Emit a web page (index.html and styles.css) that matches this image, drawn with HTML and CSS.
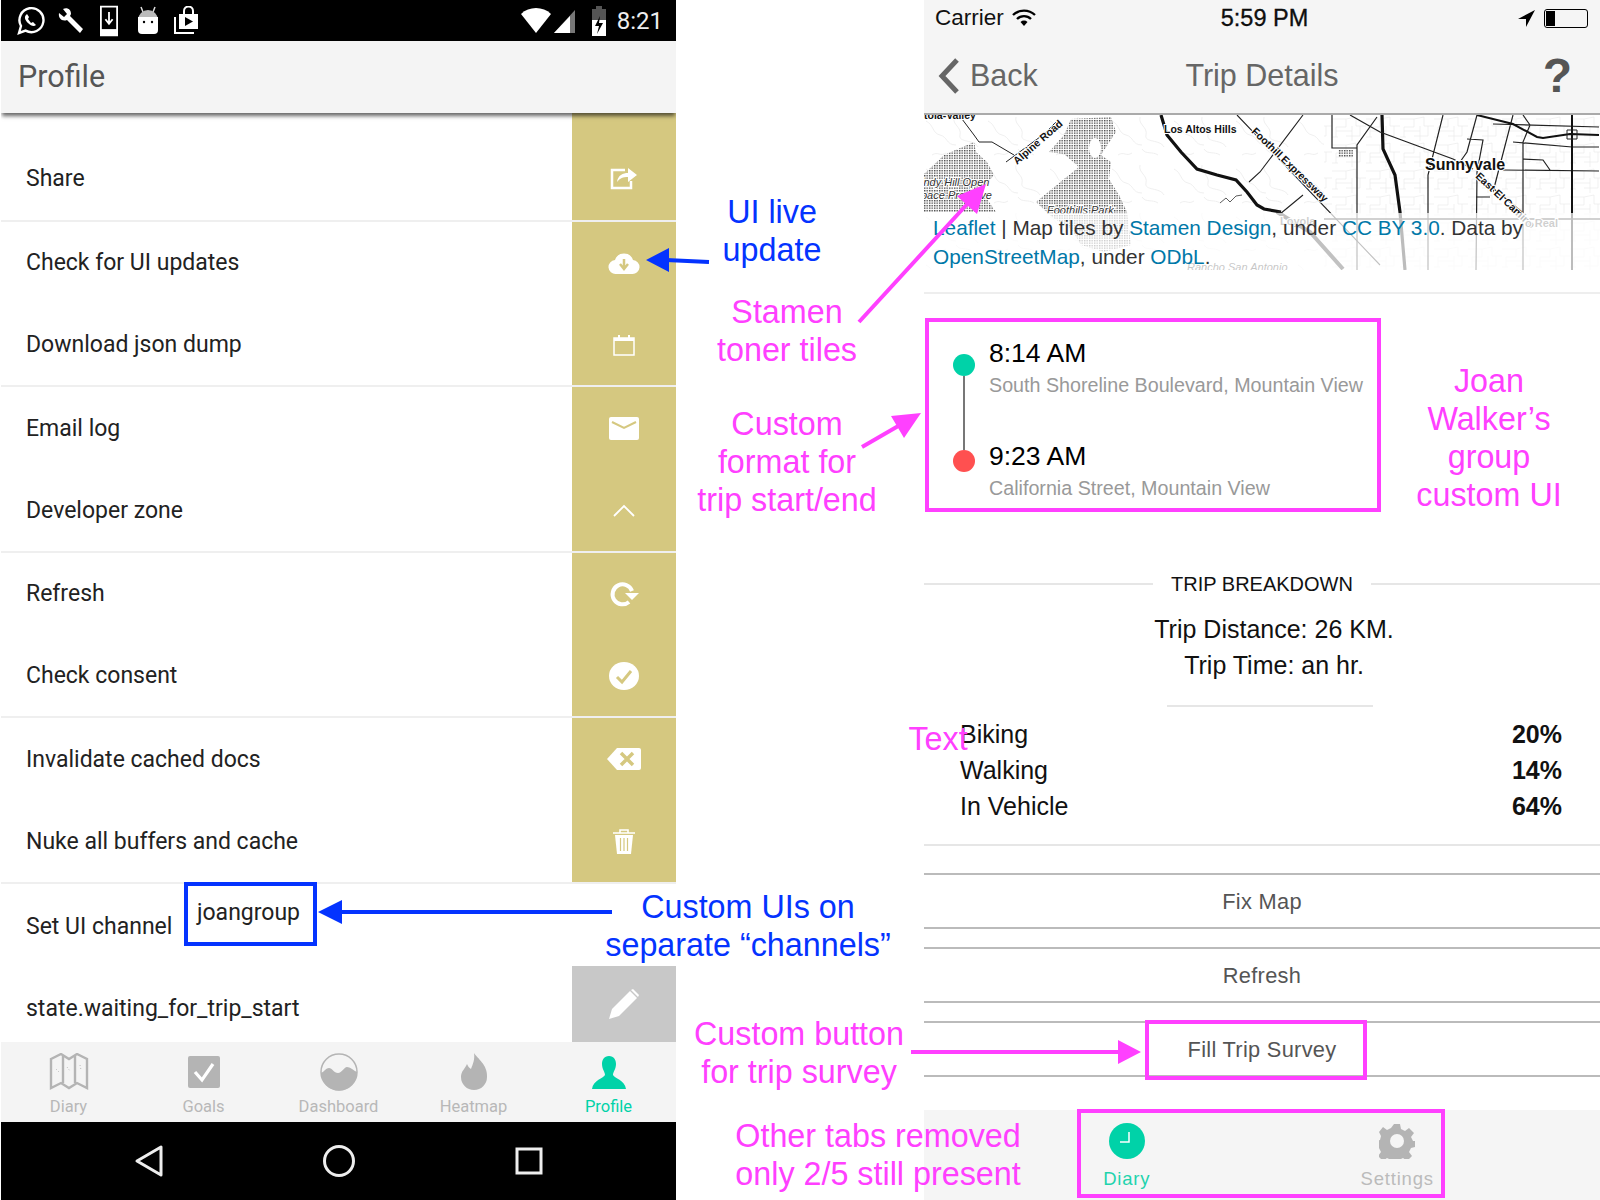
FILE: index.html
```html
<!DOCTYPE html>
<html lang="en">
<head>
<meta charset="UTF-8">
<title>Custom UI channels</title>
<link rel="stylesheet" href="styles.css">
</head>
<body>
<div class="page">

    <!-- android profile screen -->
    <div class="android">
        <div class="a-status">
            <svg width="30" height="30" viewBox="0 0 30 30" class="st st1"><path d="M3 27l2-7a12 12 0 1 1 4.600 4.600z" fill="none" stroke="#fff" stroke-width="2.400"/><path d="M10 9c-2 2-1 5 2 8s6 4 8 2l-3-3-2 1-3-4 1-2-2-3z" fill="#fff"/></svg>
            <svg width="30" height="30" viewBox="0 0 30 30" class="st st2"><path d="M3 7l5 4 3-3-4-5c4-2 8 0 8 5l-1 2 13 13-3 4-13-13c-5 2-9-2-8-7z" fill="#fff"/></svg>
            <svg width="18" height="32" viewBox="0 0 20 34" class="st st3"><path d="M1 1h18v32H1z" fill="none" stroke="#fff" stroke-width="2"/><path d="M1 26h18v7H1z" fill="#fff"/><path d="M10 7v12M6 15l4 5 4-5" fill="none" stroke="#fff" stroke-width="2"/></svg>
            <svg width="24" height="30" viewBox="0 0 24 30" class="st st4"><path d="M7 6L5 1M17 6l2-5" stroke="#ddd" stroke-width="1.500"/><path d="M2 14a10 10 0 0 1 20 0z" fill="#bbb"/><path d="M2 11h20v13a4 4 0 0 1-4 4H6a4 4 0 0 1-4-4z" fill="#fff"/><circle cx="8" cy="16" r="1.200"/><circle cx="16" cy="16" r="1.200"/></svg>
            <svg width="26" height="30" viewBox="0 0 26 30" class="st st5"><path d="M2 11v16h19" fill="none" stroke="#fff" stroke-width="2"/><path d="M6 8h19v15H6z" fill="#fff"/><path d="M11 8V5a4 4 0 0 1 9 0v3" fill="none" stroke="#fff" stroke-width="2"/><path d="M12 11l8 4.500-8 4.500z" fill="#000"/></svg>
            <span class="a-status-right">
                <svg width="32" height="26" viewBox="0 0 32 26"><path d="M1 6a22 22 0 0 1 30 0L16 25z" fill="#fff"/></svg>
                <svg width="24" height="26" viewBox="0 0 24 26" class="sig"><path d="M22 2v23H1z" fill="#777"/><path d="M17 8v17H1z" fill="#fff"/></svg>
                <svg width="16" height="30" viewBox="0 0 16 30" class="bat"><path d="M5 0h6v3h4v27H1V3h4z" fill="#555"/><path d="M1 14h14v16H1z" fill="#fff"/><path d="M9 10l-5 10h4l-2 8 6-11H8z" fill="#000"/></svg>
                <span class="a-time">8:21</span>
            </span>
        </div>
        <div class="a-header">Profile</div>
        <div class="list">
            <div class="row first"><span class="label">Share</span>
                <span class="action"><svg width="28" height="26" viewBox="0 0 28 26"><path d="M15 5H2v18h19v-7" fill="none" stroke="#fff" stroke-width="2.500"/><path d="M7 17c1-7 6-9 11-9V3l9 7-9 7v-5c-5 0-8 1-11 5z" fill="#fff"/></svg></span></div>
            <div class="row"><span class="label">Check for UI updates</span>
                <span class="action"><svg width="32" height="24" viewBox="0 0 32 24"><path d="M8 23a7 7 0 0 1-1-14 9.500 9.500 0 0 1 18 0 7 7 0 0 1-1 14z" fill="#fff"/><path d="M16 8v9M12 13l4 5 4-5" fill="none" stroke="#d5c880" stroke-width="2.500"/></svg></span></div>
            <div class="row sep"><span class="label">Download json dump</span>
                <span class="action"><svg width="24" height="22" viewBox="0 0 24 22"><path d="M2 4h20v17H2z" fill="none" stroke="#fff" stroke-width="1.500"/><path d="M2 4h20v3H2zM6 1h2v3H6zM16 1h2v3h-2z" fill="#fff"/></svg></span></div>
            <div class="row"><span class="label">Email log</span>
                <span class="action"><svg width="30" height="24" viewBox="0 0 30 24"><rect y="1" width="30" height="23" rx="2" fill="#fff"/><path d="M3 6l12 6 12-6" fill="none" stroke="#d5c880" stroke-width="2"/></svg></span></div>
            <div class="row sep"><span class="label">Developer zone</span>
                <span class="action"><svg width="24" height="14" viewBox="0 0 24 14"><path d="M2 13L12 3l10 10" fill="none" stroke="#fff" stroke-width="1.800"/></svg></span></div>
            <div class="row"><span class="label">Refresh</span>
                <span class="action"><svg width="30" height="26" viewBox="0 0 30 26"><path d="M20 21a10 10 0 1 1 3-11" fill="none" stroke="#fff" stroke-width="4"/><path d="M16 12h14l-7 7z" fill="#fff"/></svg></span></div>
            <div class="row sep"><span class="label">Check consent</span>
                <span class="action"><svg width="30" height="28" viewBox="0 0 30 28"><ellipse cx="15" cy="14" rx="15" ry="14" fill="#fff"/><path d="M8 15l5 5 9-11" fill="none" stroke="#d5c880" stroke-width="3"/></svg></span></div>
            <div class="row"><span class="label">Invalidate cached docs</span>
                <span class="action"><svg width="34" height="24" viewBox="0 0 34 24"><path d="M10 1h22a2 2 0 0 1 2 2v18a2 2 0 0 1-2 2H10L0 12z" fill="#fff"/><path d="M14 6l12 12M26 6L14 18" stroke="#d5c880" stroke-width="3.500"/></svg></span></div>
            <div class="row sep"><span class="label">Nuke all buffers and cache</span>
                <span class="action"><svg width="24" height="26" viewBox="0 0 24 26"><path d="M1 5h22M8 5V2h8v3" fill="none" stroke="#fff" stroke-width="1.600"/><path d="M3 7h18l-2 19H5z" fill="#fff"/><path d="M8.500 10v13M12 10v13M15.500 10v13" stroke="#d5c880" stroke-width="1.200"/></svg></span></div>
            <div class="row channel-row"><span class="label channel-label">Set UI channel</span>
                <span class="channel">joangroup</span></div>
            <div class="row state-row"><span class="label">state.waiting_for_trip_start</span>
                <span class="action grey"><svg width="32" height="32" viewBox="0 0 32 32"><path d="M1 31l3-10L22 3l7 7-18 18z" fill="#fff"/><path d="M23 2l2-1 6 6-1 2z" fill="#fff"/></svg></span></div>
        </div>
        <div class="a-tabs">
            <div class="a-tab">
                <svg width="40" height="38" viewBox="0 0 40 38"><path d="M2 6l10-5 8 5 8-5 10 5v29l-10-5-8 5-8-5-10 5z" fill="none" stroke="#b4b4b4" stroke-width="2.400"/><path d="M14 3v27M26 3v27" stroke="#b4b4b4" stroke-width="2.400"/><path d="M7 16l3 3M18 14l3 4M31 12l1 5" stroke="#bbb" stroke-dasharray="1 2"/></svg>
                <span>Diary</span></div>
            <div class="a-tab">
                <svg width="32" height="32" viewBox="0 0 32 32"><rect width="32" height="32" rx="2" fill="#b4b4b4"/><path d="M7 16l7 8 11-16" fill="none" stroke="#fff" stroke-width="3.200"/></svg>
                <span>Goals</span></div>
            <div class="a-tab">
                <svg width="38" height="38" viewBox="0 0 38 38"><circle cx="19" cy="19" r="18" fill="none" stroke="#b4b4b4" stroke-width="1.500"/><path d="M1 20c4-2 5-5 8-5s5 5 9 5 6-6 9-6 6 3 10 5a18 18 0 0 1-36 1z" fill="#b4b4b4"/></svg>
                <span>Dashboard</span></div>
            <div class="a-tab">
                <svg width="28" height="38" viewBox="0 0 28 38"><path d="M14 0c3 5 14 12 13 24a13 13 0 0 1-26 0c0-6 4-8 6-13 1 2 2 4 4 5 2-5 4-10 3-16z" fill="#b4b4b4"/></svg>
                <span>Heatmap</span></div>
            <div class="a-tab active">
                <svg width="34" height="34" viewBox="0 0 34 34"><path d="M17 1c5 0 7 4 7 8 0 5-3 8-3 11 1 3 12 5 13 14H0c1-9 12-11 13-14 0-3-3-6-3-11 0-4 2-8 7-8z" fill="#00d2a8"/></svg>
                <span>Profile</span></div>
        </div>
        <div class="a-nav">
            <svg width="30" height="34" viewBox="0 0 30 34"><path d="M27 3v28L3 17z" fill="none" stroke="#eee" stroke-width="3" stroke-linejoin="round"/></svg>
            <svg width="34" height="34" viewBox="0 0 34 34"><circle cx="17" cy="17" r="14.500" fill="none" stroke="#eee" stroke-width="3"/></svg>
            <svg width="28" height="30" viewBox="0 0 28 30"><rect x="2" y="3" width="24" height="24" fill="none" stroke="#eee" stroke-width="3"/></svg>
        </div>
    </div>

    <!-- ios trip details screen -->
    <div class="ios">
        <div class="i-top">
            <div class="i-status">
                <span>Carrier</span>
                <svg class="i-wifi" width="24" height="18" viewBox="0 0 24 18"><path d="M1 6a16 16 0 0 1 22 0M5 10a10 10 0 0 1 14 0" fill="none" stroke="#000" stroke-width="2.400"/><path d="M8.500 13a5 5 0 0 1 7 0L12 17z"/></svg>
                <span class="i-clock">5:59 PM</span>
                <svg width="18" height="18" viewBox="0 0 18 18"><path d="M17 1L8 18V10H0z"/></svg>
                <span class="i-battery"><span class="i-charge"></span></span>
            </div>
            <div class="i-nav">
                <svg width="22" height="36" viewBox="0 0 22 36" class="i-chev"><path d="M19 2L4 18l15 16" fill="none" stroke="#666" stroke-width="5"/></svg>
                <span class="i-back">Back</span>
                <span class="i-title">Trip Details</span>
                <span class="i-help">?</span>
            </div>
        </div>

        <div class="map">
            <svg width="676" height="155" viewBox="0 0 676 155" class="map-svg">
                <defs>
                    <pattern id="dots" width="2.500" height="2.500" patternUnits="userSpaceOnUse"><rect width="1.400" height="1.400" fill="#4a4a4a"/></pattern>
                    <pattern id="streets" width="34" height="26" patternUnits="userSpaceOnUse"><path d="M0 4h14v8H4v10M14 4l10-2v9h10M20 11v15M4 16h16M28 11v10H14M0 22h6" fill="none" stroke="#ebebeb" stroke-width=".7"/></pattern>
                    <pattern id="creeks" width="62" height="48" patternUnits="userSpaceOnUse"><path d="M2 6c8 4 6 12 14 14s6 10 16 10M30 2c-2 8 8 10 6 18s14 4 18 12M48 40c-6-4-12 0-16-6M8 40c6-4 8 2 14-2" fill="none" stroke="#e8e8e8" stroke-width=".7"/></pattern>
                </defs>
                <path d="M0 0h400v155H0z" fill="url(#creeks)"/>
                <path d="M400 0h276v155H400z" fill="url(#streets)"/>
                <path d="M0 59L20 40 50 27 52 37 63 47 70 60 60 72 50 77 63 84 72 97H0z" fill="url(#dots)"/>
                <path d="M147 4L187 2 192 17 177 40 187 47 185 64 195 80 203 97 207 130 180 137 157 130 147 114 128 102 112 87 140 64 155 52 140 39 125 37 140 20z" fill="url(#dots)"/>
                <ellipse cx="171" cy="33" rx="6" ry="10" fill="#fff"/>
                <path d="M414 35h15v7h-15z" fill="url(#dots)"/>
                <path d="M38 4L50 20 55 27H68L90 40M82 47L120 19 132 7" fill="none" stroke="#222" stroke-width="1"/>
                <path d="M296 88l6-5 4 4 6-6 6-1" fill="none" stroke="#333" stroke-width=".8"/>
                <path d="M237 0l6 20 14 17 16 17 20 6 19 5 11 12 10 13 7 4 17 3" fill="none" stroke="#111" stroke-width="3.200"/>
                <path d="M353 97l33 20 33 37" fill="none" stroke="#222" stroke-width="4"/>
                <path d="M458 0l1 34 12 26 5 37 5 58" fill="none" stroke="#111" stroke-width="3.200"/>
                <path d="M313 0L456 150M379 0L336 57 325 67M379 80L356 99" fill="none" stroke="#222" stroke-width="1.100"/>
                <path d="M408 0V33H433M433 155V30L453 2M426 0L456 17 529 44 549 54M519 0L504 60V155M553 0L543 37 536 47M543 24L559 25 553 57 552 155M552 82H566M589 0L569 77M599 0L606 10 599 27V155M589 27L648 32H675M579 55L675 56M599 44L619 45 626 55M553 60L598 97M569 9L675 12" fill="none" stroke="#222" stroke-width="1.200"/>
                <path d="M553 0L589 9 613 22 619 23 646 19 675 20M648 0V155" fill="none" stroke="#111" stroke-width="2"/>
                <path d="M643 15h10v9h-10z" fill="none" stroke="#222" stroke-width="1"/>
                <path d="M400 104H676" stroke="#222" stroke-width="1.500"/>
                <text x="0" y="4" class="m-bold">tola-Valley</text>
                <text x="-3" y="71" class="m-it">indy Hill Open</text>
                <text x="-3" y="84" class="m-it">pace Preserve</text>
                <text x="123" y="99" class="m-it">Foothills Park</text>
                <text x="240" y="18" class="m-bold">Los Altos Hills</text>
                <text x="501" y="55" class="m-big">Sunnyvale</text>
                <text transform="translate(93 50) rotate(-41)" class="m-bold">Alpine Road</text>
                <text transform="translate(327 17) rotate(44)" class="m-bold">Foothill Expressway</text>
                <text transform="translate(551 62) rotate(43)" class="m-bold">East El Camino</text>
                <text x="601" y="112" class="m-grey">o Real</text>
                <text x="356" y="110" class="m-grey">Loyola</text>
                <text x="263" y="156" class="m-it">Rancho San Antonio</text>
            </svg>
            <div class="attribution"><a>Leaflet</a> | Map tiles by <a>Stamen Design</a>, under <a>CC BY 3.0</a>. Data by <a>OpenStreetMap</a>, under <a>ODbL</a>.</div>
        </div>
        <div class="i-rule"></div>

        <div class="trip">
            <div class="timeline">
                <span class="dot start"></span>
                <span class="stem"></span>
                <span class="dot end"></span>
            </div>
            <div class="stops">
                <div class="stop">
                    <div class="time">8:14 AM</div>
                    <div class="place">South Shoreline Boulevard, Mountain View</div>
                </div>
                <div class="stop">
                    <div class="time">9:23 AM</div>
                    <div class="place">California Street, Mountain View</div>
                </div>
            </div>
        </div>

        <div class="breakdown"><span class="b-line"></span><span>TRIP BREAKDOWN</span><span class="b-line"></span></div>
        <div class="summary">
            <div>Trip Distance: 26 KM.</div>
            <div>Trip Time: an hr.</div>
        </div>
        <div class="s-rule"></div>
        <div class="modes">
            <div class="mode"><span>Biking</span><b>20%</b></div>
            <div class="mode"><span>Walking</span><b>14%</b></div>
            <div class="mode"><span>In Vehicle</span><b>64%</b></div>
        </div>
        <div class="m-rule"></div>
        <div class="i-btn">Fix Map</div>
        <div class="i-btn">Refresh</div>
        <div class="i-btn">Fill Trip Survey</div>

        <div class="i-tabs">
            <div></div>
            <div class="i-tab active">
                <svg width="36" height="36" viewBox="0 0 36 36"><circle cx="18" cy="18" r="18" fill="#00d2a8"/><path d="M20 9v10h-9" fill="none" stroke="#fff" stroke-width="1.500"/></svg>
                <span>Diary</span></div>
            <div></div>
            <div class="i-tab">
                <svg width="36" height="36" viewBox="0 0 36 36"><path d="M15 1h6l1 5 4 2 4-3 5 5-3 4 2 4 2 0v6l-4 1-2 4 3 4-5 5-4-3-4 2-1 4h-6l-1-4-4-2-4 3-5-5 3-4-2-4-3-1v-6l4-1 1-4-2-4 4-5 4 3 4-2z" fill="#b4b4b4"/><circle cx="18" cy="18" r="7" fill="#f5f5f5"/></svg>
                <span>Settings</span></div>
            <div></div>
        </div>
    </div>

    <!-- annotations drawn over the screenshots -->
    <div class="box trip-box"></div>
    <div class="box survey-box"></div>
    <div class="box tabs-box"></div>

    <svg class="arrows" width="1600" height="1200" viewBox="0 0 1600 1200">
        <path d="M709 262L666 260M612 912H340" stroke="#0433ff" stroke-width="4" fill="none"/>
        <path d="M646 260l23-12v24zM318 912l24-12v24z" fill="#0433ff"/>
        <path d="M859 322L970 201M862 447L900 425M911 1052H1120" stroke="#ff40ff" stroke-width="4" fill="none"/>
        <path d="M986 184L977 214 957 196zM921 413L904 438 891 416zM1141 1052L1118 1040V1064z" fill="#ff40ff"/>
    </svg>

    <div class="note blue ui-live">UI live<br>update</div>
    <div class="note stamen">Stamen<br>toner tiles</div>
    <div class="note format">Custom<br>format for<br>trip start/end</div>
    <div class="note joan">Joan<br>Walker’s<br>group<br>custom UI</div>
    <div class="note text-note">Text</div>
    <div class="note blue channels">Custom UIs on<br>separate “channels”</div>
    <div class="note survey">Custom button<br>for trip survey</div>
    <div class="note removed">Other tabs removed<br>only 2/5 still present</div>
</div>
</body>
</html>
```

FILE: styles.css
```css
body {
    margin: 0;
    background-color: #fff;
    font-family: "Liberation Sans", Arial, sans-serif;
}
.page {
    position: relative;
    display: flex;
    justify-content: space-between;
    width: 1600px;
    height: 1200px;
    padding-left: 1px;
    box-sizing: border-box;
    overflow: hidden;
}

/* android side */
.android {
    display: flex;
    flex-direction: column;
    width: 675px;
    height: 1200px;
    font-family: Roboto, sans-serif;
    overflow: hidden;
}
.a-status {
    display: flex;
    align-items: center;
    height: 41px;
    padding-left: 15px;
    background-color: #000;
    box-sizing: border-box;
}
.st { flex: none; }
.st2 { margin-left: 10px; }
.st3 { margin-left: 14px; }
.st4 { margin-left: 18px; }
.st5 { margin-left: 13px; }
.a-status-right {
    display: flex;
    align-items: center;
    margin-left: auto;
    padding-right: 13px;
}
.sig { margin-left: 1px; }
.bat { margin-left: 14px; }
.a-time {
    margin-left: 10px;
    color: #eee;
    font-size: 24px;
}
.a-header {
    position: relative;
    z-index: 2;
    height: 72px;
    padding-left: 17px;
    background-color: #f4f4f4;
    box-shadow: 0 4px 4px -1px rgba(0, 0, 0, 0.6);
    color: #555;
    font-size: 30.5px;
    line-height: 71px;
}
.list {
    display: flex;
    flex-direction: column;
    flex: 1;
}
.row {
    display: flex;
    justify-content: space-between;
    height: 82.75px;
    box-sizing: border-box;
    font-size: 23px;
    color: #222;
}
.row.first {
    height: 108.5px;
    border-bottom: 2px solid #efefef;
}
.row.first .label, .row.first .action { padding-top: 24px; }
.row.sep { border-bottom: 2px solid #efefef; }
.label {
    display: flex;
    align-items: center;
    padding-left: 25px;
}
.action {
    display: flex;
    align-items: center;
    justify-content: center;
    width: 104px;
    background-color: #d5c880;
}
.channel-row {
    justify-content: flex-start;
    height: 82.5px;
}
.channel-label {
    width: 183px;
    box-sizing: border-box;
    padding-top: 4px;
}
.channel {
    align-self: flex-start;
    display: flex;
    align-items: center;
    width: 133px;
    height: 64px;
    margin-top: -2px;
    padding-left: 9px;
    padding-bottom: 2px;
    border: 4px solid #0433ff;
    box-sizing: border-box;
}
.state-row {
    height: 76px;
}
.state-row .label { padding-top: 8px; }
.action.grey {
    background-color: #c8c8c8;
}
.a-tabs {
    display: grid;
    grid-template-columns: repeat(5, 1fr);
    height: 80px;
    background-color: #f4f4f4;
}
.a-tab {
    display: flex;
    flex-direction: column;
    align-items: center;
    height: 80px;
    padding-top: 11px;
    box-sizing: border-box;
    color: #b8b8b8;
    font-size: 16.5px;
}
.a-tab svg { height: 38px; }
.a-tab span { margin-top: 6px; }
.a-tab.active { color: #00d2a8; }
.a-nav {
    display: grid;
    grid-template-columns: repeat(3, 190px);
    justify-content: center;
    justify-items: center;
    align-items: center;
    height: 78px;
    background-color: #000;
}

/* ios side */
.ios {
    display: flex;
    flex-direction: column;
    width: 676px;
    height: 1200px;
    color: #111;
}
.i-top {
    height: 115px;
    background-color: #f5f5f5;
    border-bottom: 2px solid #aaa;
    box-sizing: border-box;
}
.i-status {
    display: flex;
    align-items: center;
    height: 36px;
    padding: 0 12px 0 11px;
    font-size: 22.5px;
}
.i-wifi { margin-left: 8px; }
.i-clock {
    margin-left: 185px;
    margin-right: auto;
    font-size: 23.5px;
    font-weight: 500;
    -webkit-text-stroke: 0.3px #000;
}
.i-battery {
    display: block;
    width: 40px;
    height: 15px;
    margin-left: 8px;
    padding: 1px;
    border: 1px solid #000;
    border-radius: 3px;
}
.i-charge {
    display: block;
    width: 9px;
    height: 15px;
    background-color: #000;
}
.i-nav {
    position: relative;
    display: flex;
    align-items: center;
    height: 79px;
    padding-left: 14px;
    font-size: 30.5px;
    color: #666;
}
.i-back { margin-left: 10px; }
.i-title {
    position: absolute;
    left: 0;
    right: 0;
    text-align: center;
    pointer-events: none;
}
.i-help {
    margin-left: auto;
    margin-right: 28px;
    font-size: 48px;
    font-weight: bold;
    color: #555;
}
.map {
    position: relative;
    height: 155px;
    overflow: hidden;
}
.map-svg { display: block; }
.map-svg text {
    font-family: "Liberation Sans", sans-serif;
    paint-order: stroke;
    stroke: #fff;
    stroke-width: 2px;
}
.m-bold { font-size: 10.5px; font-weight: bold; fill: #111; }
.m-big { font-size: 16px; font-weight: bold; fill: #111; }
.m-it { font-size: 11px; font-style: italic; fill: #333; }
.m-grey { font-size: 11px; font-weight: bold; fill: #555; }
.attribution {
    position: absolute;
    left: 0;
    right: 0;
    bottom: 0;
    height: 57px;
    padding-left: 9px;
    box-sizing: border-box;
    background-color: rgba(255, 255, 255, 0.72);
    color: #333;
    font-size: 20.8px;
    line-height: 29px;
}
.attribution a { color: #0078a8; }
.i-rule {
    height: 2px;
    margin-top: 22px;
    background-color: #eee;
}
.trip {
    display: flex;
    margin-top: 43px;
}
.timeline {
    display: flex;
    flex-direction: column;
    align-items: flex-start;
    width: 65px;
    padding: 17px 0 0 29px;
    box-sizing: border-box;
}
.dot {
    width: 22px;
    height: 22px;
    border-radius: 50%;
}
.dot.start { background-color: #00d2a8; }
.dot.end { background-color: #ff5050; }
.stem {
    width: 2px;
    height: 74px;
    margin-left: 10px;
    background-color: #777;
}
.stop { height: 103px; }
.time {
    font-size: 26.5px;
    line-height: 32px;
    color: #000;
}
.place {
    margin-top: 3px;
    font-size: 19.7px;
    line-height: 26px;
    color: #999;
}
.breakdown {
    display: flex;
    align-items: center;
    gap: 18px;
    margin-top: 29px;
    font-size: 20px;
    line-height: 24px;
}
.b-line {
    flex: 1;
    height: 2px;
    background-color: #e6e6e6;
}
.summary {
    margin-top: 15px;
    padding-left: 24px;
    text-align: center;
    font-size: 25px;
    line-height: 36px;
}
.s-rule {
    align-self: center;
    width: 206px;
    height: 2px;
    margin: 22px 0 0 16px;
    background-color: #e6e6e6;
}
.modes {
    margin-top: 9px;
    padding: 0 38px 0 36px;
    font-size: 25px;
    line-height: 36px;
}
.mode {
    display: flex;
    justify-content: space-between;
}
.m-rule {
    height: 2px;
    margin-top: 20px;
    margin-bottom: 9px;
    background-color: #e6e6e6;
}
.i-btn {
    height: 52px;
    margin-top: 18px;
    border-top: 2px solid #bbb;
    border-bottom: 2px solid #bbb;
    color: #555;
    font-size: 21.8px;
    line-height: 53px;
    text-align: center;
    letter-spacing: 0.3px;
}
.i-tabs {
    display: grid;
    grid-template-columns: repeat(5, 1fr);
    margin-top: auto;
    height: 90px;
    background-color: #f5f5f5;
}
.i-tab {
    display: flex;
    flex-direction: column;
    align-items: center;
    padding-top: 13px;
    color: #bbb;
    font-size: 18.5px;
    letter-spacing: 0.8px;
}
.i-tab span { margin-top: 9px; }
.i-tab.active { color: #1fd3ad; }

/* annotations */
.box {
    position: absolute;
    border: 4px solid #ff40ff;
    box-sizing: border-box;
}
.trip-box { left: 925px; top: 318px; width: 456px; height: 194px; }
.survey-box { left: 1145px; top: 1020px; width: 222px; height: 60px; }
.tabs-box { left: 1077px; top: 1109px; width: 368px; height: 89px; }
.arrows {
    position: absolute;
    left: 0;
    top: 0;
    pointer-events: none;
}
.note {
    position: absolute;
    color: #ff40ff;
    font-size: 32.3px;
    line-height: 38px;
    text-align: center;
    white-space: nowrap;
    transform: translateX(-50%);
}
.note.blue { color: #0433ff; }
.ui-live { left: 772px; top: 193px; }
.stamen { left: 787px; top: 293px; }
.format { left: 787px; top: 405px; }
.joan { left: 1489px; top: 362px; }
.text-note { left: 938px; top: 720px; }
.channels { left: 748px; top: 888px; }
.survey { left: 799px; top: 1015px; }
.removed { left: 878px; top: 1117px; }
```
